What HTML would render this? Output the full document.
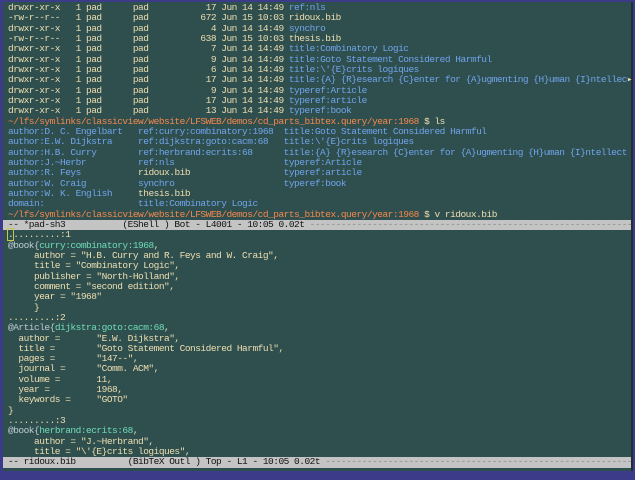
<!DOCTYPE html>
<html><head><meta charset="utf-8"><style>
html,body{margin:0;padding:0;}
body{width:635px;height:480px;background:#3b3b8a;position:relative;overflow:hidden;}
#f{position:absolute;left:3px;top:2px;width:628px;height:469px;background:#2f4f4f;border-right:2px solid #1f2f3a;}
pre{margin:0;position:absolute;left:5px;top:1px;font-family:"Liberation Mono",monospace;font-size:9.5px;letter-spacing:-0.5px;line-height:10.33px;color:#eedfb0;white-space:pre;}
.b{color:#70a4ea}.o{color:#f5884c}.k{color:#70dcb8}.g{color:#bccad2}
.m{display:block;background:#c4c4c4;color:#111;margin-left:-5px;padding-left:5px;width:623px;overflow:hidden}
.d{color:#8a8a8a}
.c{outline:1px solid #c8c850;}
</style></head><body><div id="f"><pre>drwxr-xr-x   1 pad      pad           17 Jun 14 14:49 <span class="b">ref:nls</span>
-rw-r--r--   1 pad      pad          672 Jun 15 10:03 ridoux.bib
drwxr-xr-x   1 pad      pad            4 Jun 14 14:49 <span class="b">synchro</span>
-rw-r--r--   1 pad      pad          638 Jun 15 10:03 thesis.bib
drwxr-xr-x   1 pad      pad            7 Jun 14 14:49 <span class="b">title:Combinatory Logic</span>
drwxr-xr-x   1 pad      pad            9 Jun 14 14:49 <span class="b">title:Goto Statement Considered Harmful</span>
drwxr-xr-x   1 pad      pad            6 Jun 14 14:49 <span class="b">title:\'{E}crits logiques</span>
drwxr-xr-x   1 pad      pad           17 Jun 14 14:49 <span class="b">title:{A} {R}esearch {C}enter for {A}ugmenting {H}uman {I}ntellec</span>&#9656;
drwxr-xr-x   1 pad      pad            9 Jun 14 14:49 <span class="b">typeref:Article</span>
drwxr-xr-x   1 pad      pad           17 Jun 14 14:49 <span class="b">typeref:article</span>
drwxr-xr-x   1 pad      pad           13 Jun 14 14:49 <span class="b">typeref:book</span>
<span class="o">~/lfs/symlinks/classicview/website/LFSWEB/demos/cd_parts_bibtex.query/year:1968</span> $ ls
<span class="b">author:D. C. Engelbart   ref:curry:combinatory:1968  title:Goto Statement Considered Harmful</span>
<span class="b">author:E.W. Dijkstra     ref:dijkstra:goto:cacm:68   title:\'{E}crits logiques</span>
<span class="b">author:H.B. Curry        ref:herbrand:ecrits:68      title:{A} {R}esearch {C}enter for {A}ugmenting {H}uman {I}ntellect</span>
<span class="b">author:J.~Herbr          ref:nls                     typeref:Article</span>
<span class="b">author:R. Feys</span>           ridoux.bib                  <span class="b">typeref:article</span>
<span class="b">author:W. Craig          synchro                     typeref:book</span>
<span class="b">author:W. K. English</span>     thesis.bib
<span class="b">domain:                  title:Combinatory Logic</span>
<span class="o">~/lfs/symlinks/classicview/website/LFSWEB/demos/cd_parts_bibtex.query/year:1968</span> $ v ridoux.bib
<span class="m">-- *pad-sh3           (EShell ) Bot - L4001 - 10:05 0.02t <span class="d">------------------------------------------------------------------</span></span><span class="c">.</span>.........:1
<span class="g">@book{</span><span class="k">curry:combinatory:1968</span>,
     author = "H.B. Curry and R. Feys and W. Craig",
     title = "Combinatory Logic",
     publisher = "North-Holland",
     comment = "second edition",
     year = "1968"
     }
.........:2
<span class="g">@Article{</span><span class="k">dijkstra:goto:cacm:68</span>,
  author =       "E.W. Dijkstra",
  title =        "Goto Statement Considered Harmful",
  pages =        "147--",
  journal =      "Comm. ACM",
  volume =       11,
  year =         1968,
  keywords =     "GOTO"
}
.........:3
<span class="g">@book{</span><span class="k">herbrand:ecrits:68</span>,
     author = "J.~Herbrand",
     title = "\'{E}crits logiques",
<span class="m">-- ridoux.bib          (BibTeX Outl ) Top - L1 - 10:05 0.02t <span class="d">--------------------------------------------------------------------</span></span></pre></div></body></html>
